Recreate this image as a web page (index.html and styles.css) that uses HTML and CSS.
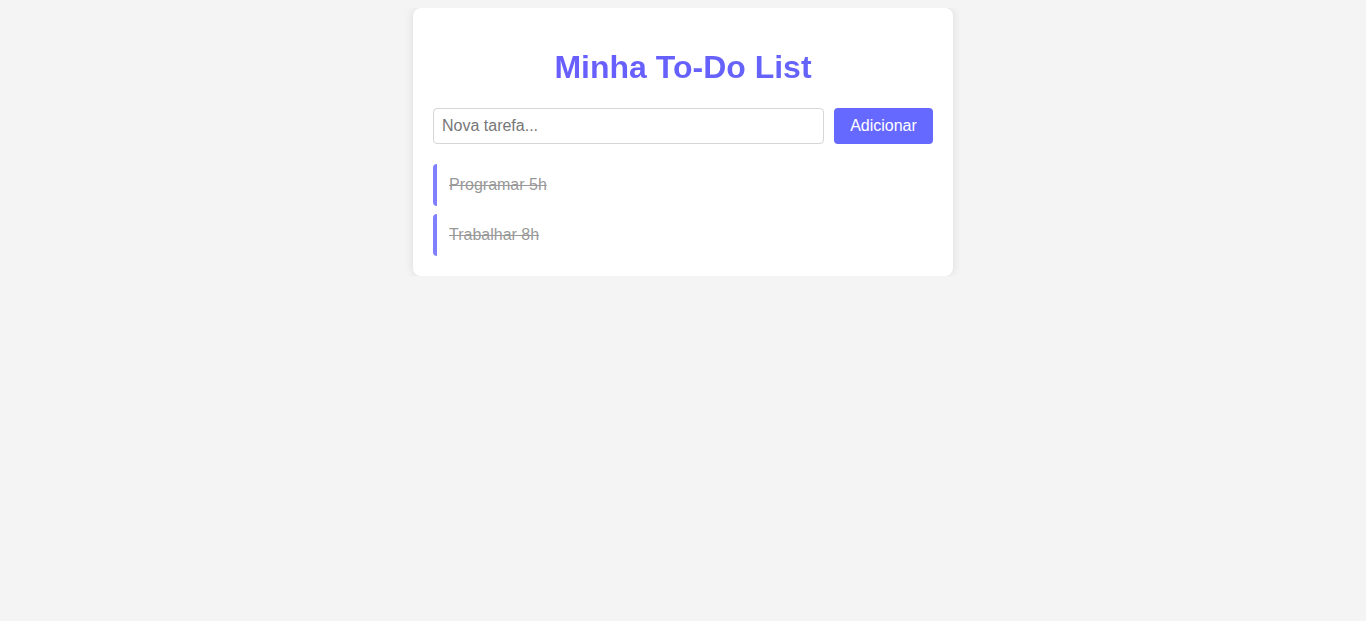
FILE: index.html
```html
<!DOCTYPE html>
<html lang="pt">
<head>
<meta charset="utf-8">
<title>Minha To-Do List</title>
<link rel="stylesheet" href="styles.css">
</head>
<body>
<div class="card">
  <h1 class="title">Minha To-Do List</h1>
  <div class="form">
    <input class="task-input" type="text" placeholder="Nova tarefa...">
    <button class="add-btn">Adicionar</button>
  </div>
  <ul class="list">
    <li class="item done">Programar 5h</li>
    <li class="item done">Trabalhar 8h</li>
  </ul>
</div>
</body>
</html>
```

FILE: styles.css
```css
body {
  margin: 8px;
  background: #f4f4f4;
  font-family: "Liberation Sans", Arial, sans-serif;
}
.card {
  width: 500px;
  margin: 0 auto;
  padding: 20px;
  background: #fff;
  border-radius: 8px;
  box-shadow: 0 0 10px rgba(0, 0, 0, 0.1);
}
.title {
  margin: 21px 0 22px;
  text-align: center;
  font-size: 32px;
  font-weight: bold;
  color: #6366ff;
  background: linear-gradient(90deg, #6a5cff, #6366f8);
  -webkit-background-clip: text;
  background-clip: text;
  -webkit-text-fill-color: transparent;
}
.form {
  display: flex;
  gap: 10px;
}
.task-input {
  flex: 1;
  height: 36px;
  box-sizing: border-box;
  padding: 8px;
  font-size: 16px;
  font-family: "Liberation Sans", Arial, sans-serif;
  border: 1px solid #d6d6d6;
  border-radius: 4px;
  color: #333;
}
.task-input::placeholder {
  color: #777;
}
.add-btn {
  width: 99px;
  height: 36px;
  border: none;
  border-radius: 4px;
  background: #6669ff;
  color: #fff;
  font-size: 16px;
  font-family: "Liberation Sans", Arial, sans-serif;
}
.list {
  list-style: none;
  margin: 20px 0 0;
  padding: 0;
  display: flex;
  flex-direction: column;
  gap: 8px;
}
.item {
  padding: 12px;
  line-height: 18px;
  font-size: 16px;
  border-left: 4px solid #8080ff;
  border-radius: 4px;
  background: #fff;
}
.item.done {
  color: #999;
  text-decoration: line-through;
}
```
